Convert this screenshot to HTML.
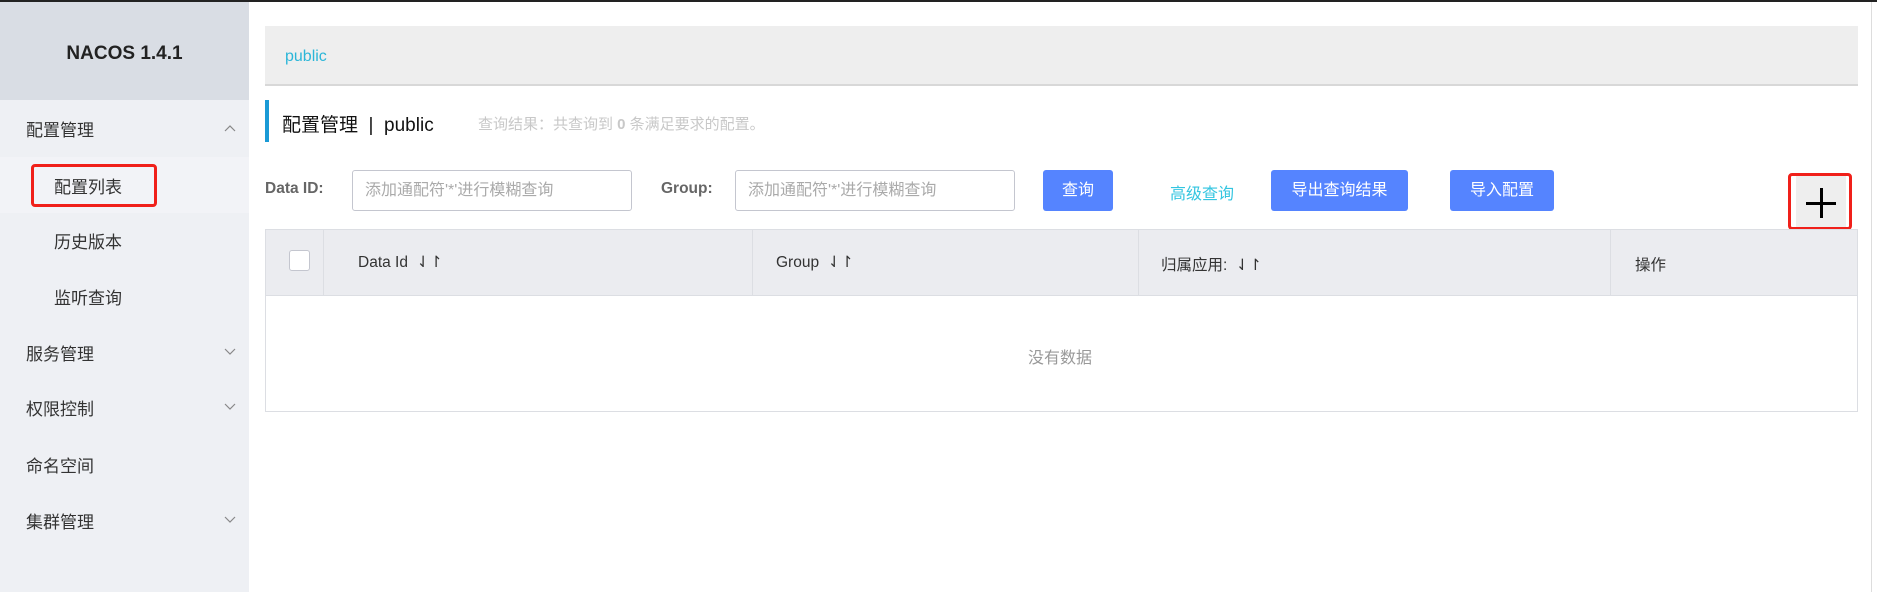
<!DOCTYPE html>
<html><head><meta charset="utf-8"><style>
*{margin:0;padding:0;box-sizing:border-box}
body{width:1877px;height:592px;overflow:hidden;background:#fff;font-family:"Liberation Sans","Noto Sans CJK SC",sans-serif;position:relative}
.a{position:absolute;white-space:nowrap}
.side{position:absolute;left:0;top:0;width:249px;height:592px;background:#eef0f4}
.m{position:absolute;font-size:17px;color:#333;line-height:20px}
.btn{position:absolute;top:170px;height:41px;background:#5584ff;color:#fff;border-radius:3px;font-size:16px;text-align:center;line-height:41px}
.inp{position:absolute;top:170px;height:41px;border:1px solid #c4c6cf;border-radius:3px;font-size:16px;color:#aaa;line-height:39px;padding-left:12px}
.th{position:absolute;top:253px;font-size:15.5px;color:#333}
.vl{position:absolute;top:229px;height:67px;width:1px;background:#dcdee3}
</style></head><body>
<div class="side"></div>
<div class="a" style="left:0;top:0;width:249px;height:100px;background:#d9dde4"></div>
<div class="a" style="left:0;top:0;width:1877px;height:2px;background:#222"></div>
<div class="a" style="left:0;top:43px;width:249px;text-align:center;font-weight:bold;font-size:19px;color:#222">NACOS 1.4.1</div>
<div class="a" style="left:0;top:157px;width:249px;height:56px;background:#f2f3f7"></div>
<div class="m" style="left:26px;top:121px">配置管理</div>
<svg class="a" style="left:224px;top:124px" width="12" height="8"><path d="M1 7l5-5 5 5" fill="none" stroke="#888" stroke-width="1.2"/></svg>
<div class="m" style="left:54px;top:178px">配置列表</div>
<div class="a" style="left:31px;top:164px;width:126px;height:43px;border:3px solid #f0201a;border-radius:4px"></div>
<div class="m" style="left:54px;top:233px">历史版本</div>
<div class="m" style="left:54px;top:289px">监听查询</div>
<div class="m" style="left:26px;top:345px">服务管理</div>
<div class="m" style="left:26px;top:400px">权限控制</div>
<div class="m" style="left:26px;top:457px">命名空间</div>
<div class="m" style="left:26px;top:513px">集群管理</div>
<svg class="a" style="left:224px;top:348px" width="12" height="8"><path d="M1 1l5 5 5-5" fill="none" stroke="#888" stroke-width="1.2"/></svg>
<svg class="a" style="left:224px;top:403px" width="12" height="8"><path d="M1 1l5 5 5-5" fill="none" stroke="#888" stroke-width="1.2"/></svg>
<svg class="a" style="left:224px;top:516px" width="12" height="8"><path d="M1 1l5 5 5-5" fill="none" stroke="#888" stroke-width="1.2"/></svg>

<div class="a" style="left:265px;top:26px;width:1593px;height:60px;background:#eee;border-bottom:2px solid #d8d8d8"></div>
<div class="a" style="left:285px;top:48px;font-size:16px;color:#2bb6d8">public</div>
<div class="a" style="left:265px;top:100px;width:4px;height:42px;background:#1a9ad6"></div>
<div class="a" style="left:282px;top:110px;font-size:19px;color:#111">配置管理 &nbsp;|&nbsp; public</div>
<div class="a" style="left:478px;top:113px;font-size:15px;color:#c8c8c8">查询结果：共查询到 <b>0</b> 条满足要求的配置。</div>

<div class="a" style="left:265px;top:180px;font-size:15.5px;font-weight:bold;color:#666">Data ID:</div>
<div class="inp" style="left:352px;width:280px">添加通配符'*'进行模糊查询</div>
<div class="a" style="left:661px;top:180px;font-size:15.5px;font-weight:bold;color:#666">Group:</div>
<div class="inp" style="left:735px;width:280px">添加通配符'*'进行模糊查询</div>
<div class="btn" style="left:1043px;width:70px">查询</div>
<div class="a" style="left:1170px;top:180px;font-size:16px;color:#33c5e0">高级查询</div>
<div class="btn" style="left:1271px;width:137px">导出查询结果</div>
<div class="btn" style="left:1450px;width:104px">导入配置</div>
<div class="a" style="left:1788px;top:173px;width:64px;height:57px;border:3px solid #f0201a;border-radius:4px;background:#fff"></div>
<div class="a" style="left:1796px;top:176px;width:50px;height:51px;background:#eee"></div>
<div class="a" style="left:1806px;top:202px;width:30px;height:3px;background:#000"></div>
<div class="a" style="left:1820px;top:188px;width:3px;height:30px;background:#000"></div>

<div class="a" style="left:265px;top:229px;width:1593px;height:183px;border:1px solid #dcdee3"></div>
<div class="a" style="left:265px;top:229px;width:1593px;height:67px;background:#ebecf0;border:1px solid #dcdee3"></div>
<div class="vl" style="left:323px"></div><div class="vl" style="left:752px"></div><div class="vl" style="left:1138px"></div><div class="vl" style="left:1610px"></div>
<div class="a" style="left:289px;top:250px;width:21px;height:21px;background:#fff;border:1px solid #c4c6cf;border-radius:3px"></div>
<div class="th" style="left:358px">Data Id &nbsp;⇃↾</div>
<div class="th" style="left:776px">Group &nbsp;⇃↾</div>
<div class="th" style="left:1161px">归属应用: &nbsp;⇃↾</div>
<div class="th" style="left:1635px">操作</div>
<div class="a" style="left:1028px;top:344px;font-size:16px;color:#999">没有数据</div>
<div class="a" style="left:1871px;top:2px;width:1px;height:590px;background:#ddd"></div>
</body></html>
